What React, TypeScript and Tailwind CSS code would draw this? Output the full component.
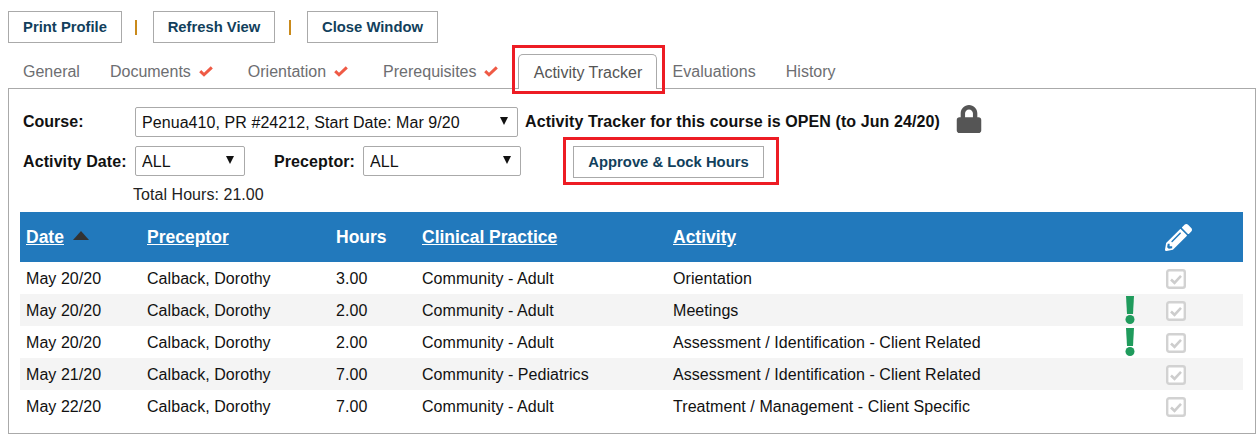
import React from "react";
import { FaLock, FaPencilAlt } from "react-icons/fa";

const rows = [
  { date: "May 20/20", hours: "3.00", practice: "Community - Adult", activity: "Orientation", flag: false },
  { date: "May 20/20", hours: "2.00", practice: "Community - Adult", activity: "Meetings", flag: true },
  { date: "May 20/20", hours: "2.00", practice: "Community - Adult", activity: "Assessment / Identification - Client Related", flag: true },
  { date: "May 21/20", hours: "7.00", practice: "Community - Pediatrics", activity: "Assessment / Identification - Client Related", flag: false },
  { date: "May 22/20", hours: "7.00", practice: "Community - Adult", activity: "Treatment / Management - Client Specific", flag: false },
];

function TabCheck() {
  return (
    <svg viewBox="0 0 14 11" className="ml-[8px] h-[11px] w-[14px] -translate-y-[1px]">
      <path d="M1.2 5.2 L5 8.8 L12.8 1.4" fill="none" stroke="#ef5a45" strokeWidth="3" />
    </svg>
  );
}

function Bang() {
  return (
    <svg viewBox="0 0 10 28" className="h-[28px] w-[10px]">
      <path d="M1 0 H9 L8 18 H2 Z" fill="#1f9b5c" />
      <circle cx="5" cy="23.5" r="4.5" fill="#1f9b5c" />
    </svg>
  );
}

function DisabledCheck() {
  return (
    <svg viewBox="0 0 20 20" className="h-[20px] w-[20px]">
      <rect x="1.2" y="1.2" width="17.6" height="17.6" rx="2" fill="#fff" stroke="#d2d2d2" strokeWidth="2.4" />
      <path d="M5 10.5 L8.5 13.8 L15 6.8" fill="none" stroke="#cdcdcd" strokeWidth="2.6" />
    </svg>
  );
}

function Select({ value, className, arrow }: { value: string; className: string; arrow: string }) {
  return (
    <div className={`relative h-[30px] ${className}`}>
      <select className="h-full w-full appearance-none rounded-[2px] border border-[#aaaaaa] bg-white pl-[6px] pt-[1px] text-[16px] tracking-[0.07px] text-[#111111]">
        <option>{value}</option>
      </select>
      <span className={`pointer-events-none absolute top-[10px] h-0 w-0 border-x-[4px] border-t-[8px] border-x-transparent border-t-[#111111] ${arrow}`} />
    </div>
  );
}

function ActionButton({ label, className }: { label: string; className: string }) {
  return (
    <button className={`h-[32px] border border-[#aaaaaa] bg-white text-[14.8px] font-bold text-[#123f5c] ${className}`}>
      {label}
    </button>
  );
}

export default function App() {
  return (
    <div className="relative h-[443px] w-[1259px] overflow-hidden bg-white font-['Liberation_Sans',Arial,sans-serif] text-[16px] text-[#111111]">
      <div className="flex items-center pl-[8px] pt-[11px]">
        <ActionButton label="Print Profile" className="w-[114px]" />
        <span className="ml-[13px] mr-[16px] h-[15px] w-[2px] bg-[#c98a1b]" />
        <ActionButton label="Refresh View" className="w-[122px]" />
        <span className="ml-[14px] mr-[16px] h-[15px] w-[2px] bg-[#c98a1b]" />
        <ActionButton label="Close Window" className="w-[131px]" />
      </div>

      <div className="flex h-[45px] items-end pl-[8px] text-[#6d6e71]">
        <div className="flex h-[34px] items-center px-[15px] pt-[2px]">General</div>
        <div className="flex h-[34px] items-center pl-[15px] pr-[20px] pt-[2px]">Documents<TabCheck /></div>
        <div className="flex h-[34px] items-center pl-[15px] pr-[20px] pt-[2px]">Orientation<TabCheck /></div>
        <div className="flex h-[34px] items-center pl-[15px] pr-[20px] pt-[2px]">Prerequisites<TabCheck /></div>
        <div className="relative top-px flex h-[35px] w-[139px] items-center justify-center rounded-t-[5px] border border-b-0 border-[#aaaaaa] bg-white pt-[2px] text-[#555555]">
          Activity Tracker
        </div>
        <div className="flex h-[34px] items-center px-[15px] pt-[2px] tracking-[0.05px]">Evaluations</div>
        <div className="flex h-[34px] items-center px-[15px] pt-[2px]">History</div>
      </div>

      <div className="ml-[8px] h-[346px] w-[1248px] border border-[#aaaaaa] px-[11px] pt-[18px]">
        <div className="flex h-[30px] items-center pl-[3px]">
          <span className="w-[112px] font-bold">Course:</span>
          <Select value="Penua410, PR #24212, Start Date: Mar 9/20" className="w-[383px]" arrow="right-[10px]" />
          <span className="ml-[7px] font-bold tracking-[0.09px]">Activity Tracker for this course is OPEN (to Jun 24/20)</span>
          <FaLock className="ml-[15px] -translate-y-[3px] text-[28px] text-[#555555]" />
        </div>

        <div className="mt-[9px] flex h-[32px] items-start pl-[3px]">
          <span className="flex h-[30px] w-[112px] items-center pt-[2px] font-bold tracking-[0.1px]">Activity Date:</span>
          <Select value="ALL" className="w-[110px]" arrow="right-[11px]" />
          <span className="ml-[29px] flex h-[30px] w-[89px] items-center pt-[2px] font-bold tracking-[0.1px]">Preceptor:</span>
          <Select value="ALL" className="w-[158px]" arrow="right-[10px]" />
          <ActionButton label="Approve & Lock Hours" className="ml-[52px] w-[191px]" />
        </div>

        <div className="pl-[113px] pt-[7px] leading-[20px] tracking-[0.05px] text-[#222222]">Total Hours: 21.00</div>

        <table className="mt-[7px] w-[1223px] table-fixed border-collapse">
          <colgroup>
            <col className="w-[121px]" />
            <col className="w-[189px]" />
            <col className="w-[86px]" />
            <col className="w-[251px]" />
            <col className="w-[435px]" />
            <col className="w-[56px]" />
            <col />
          </colgroup>
          <thead>
            <tr className="h-[50px] bg-[#2279bc] text-left text-[17.5px] font-bold text-white">
              <th className="px-[6px]">
                <span className="underline">Date</span>
                <span className="ml-[9px] inline-block h-0 w-0 -translate-y-[3px] border-x-[8px] border-b-[9px] border-x-transparent border-b-[#333333]" />
              </th>
              <th className="px-[6px] underline">Preceptor</th>
              <th className="px-[6px]">Hours</th>
              <th className="px-[6px] underline">Clinical Practice</th>
              <th className="px-[6px] underline">Activity</th>
              <th />
              <th className="pl-[7px]"><FaPencilAlt className="text-[27px]" /></th>
            </tr>
          </thead>
          <tbody className="tracking-[0.06px]">
            {rows.map((row, i) => (
              <tr key={i} className={`h-[32px] ${i % 2 === 1 ? "bg-[#f4f4f4]" : "bg-white"}`}>
                <td className="px-[6px] pt-[2px]">{row.date}</td>
                <td className="px-[6px] pt-[2px]">Calback, Dorothy</td>
                <td className="px-[6px] pt-[2px]">{row.hours}</td>
                <td className="px-[6px] pt-[2px]">{row.practice}</td>
                <td className="px-[6px] pt-[2px]">{row.activity}</td>
                <td className="p-0">{row.flag && <div className="flex justify-center"><Bang /></div>}</td>
                <td className="pl-[8px] pt-[2px]"><DisabledCheck /></td>
              </tr>
            ))}
          </tbody>
        </table>
      </div>

      {/* red annotation boxes drawn over the screenshot */}
      <div className="pointer-events-none absolute left-[512px] top-[45px] h-[49px] w-[153px] border-[3px] border-[#ed1c24]" />
      <div className="pointer-events-none absolute left-[563px] top-[137px] h-[48px] w-[216px] border-[3px] border-[#ed1c24]" />
    </div>
  );
}
